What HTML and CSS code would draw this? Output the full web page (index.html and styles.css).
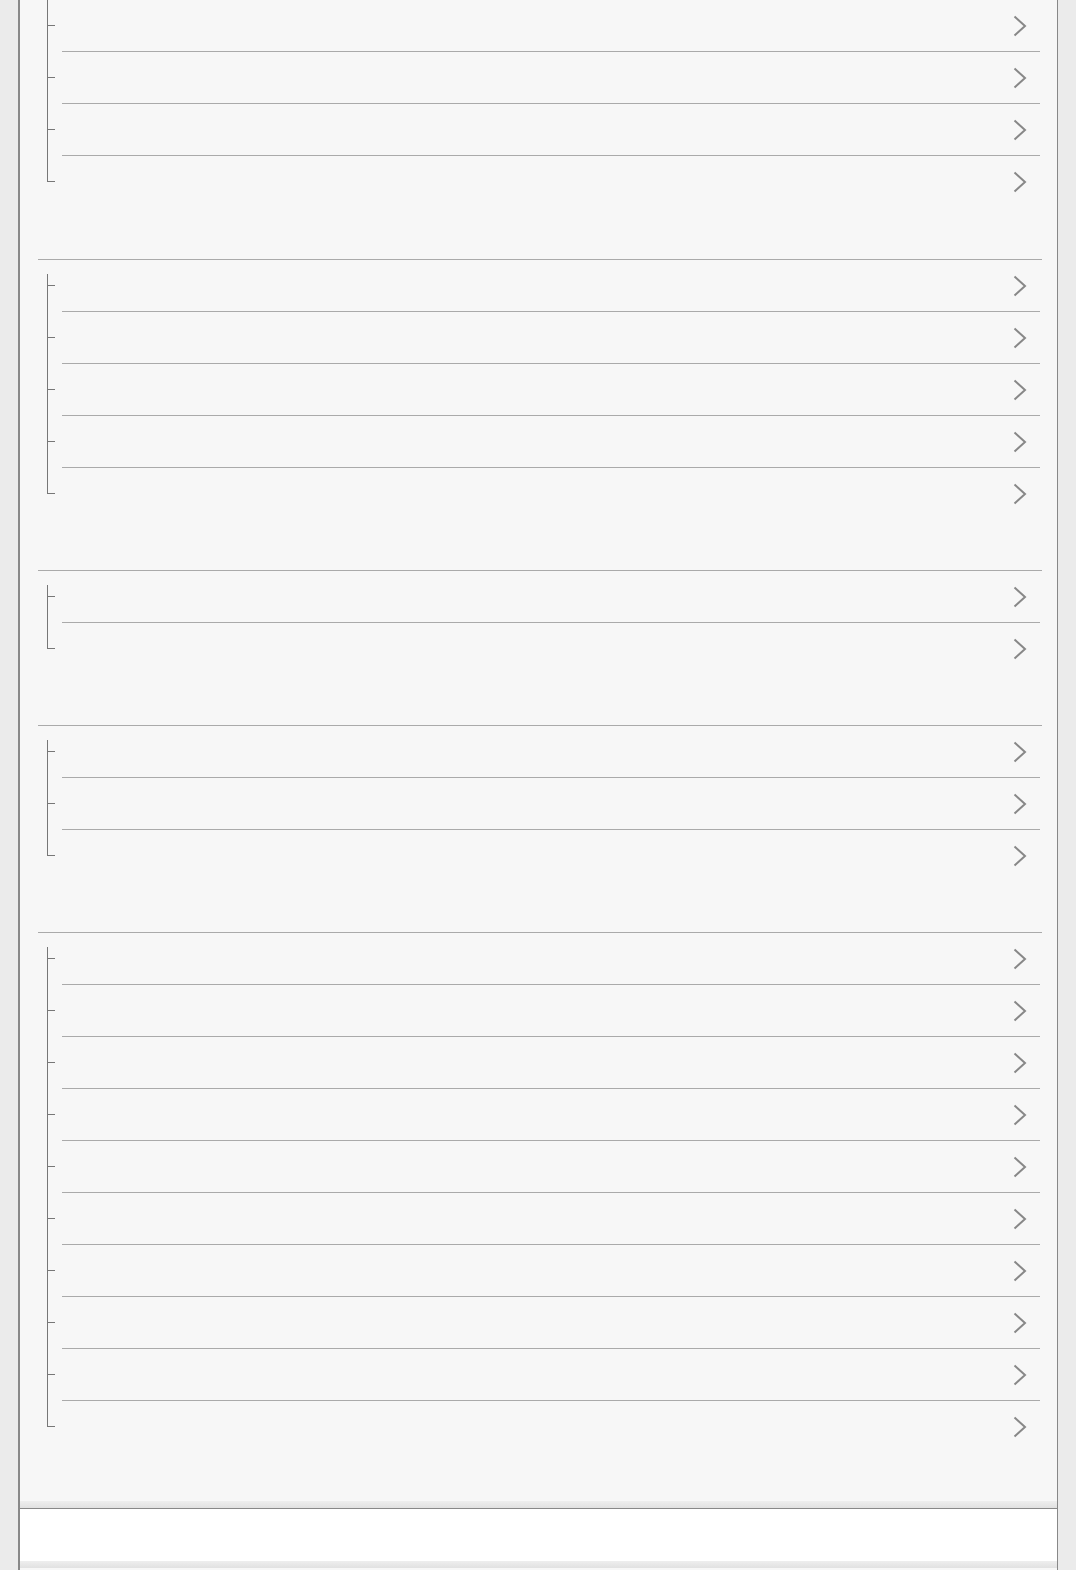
FILE: index.html
```html
<html>
  <head>
    <title>List</title>
    <link rel="stylesheet" href="styles.css">
  </head>
  <body>
  <div id="panel">
    <div class="group cut">
      <div class="row"><svg class="chev" viewBox="0 0 14 22"><polyline points="1.5,1.5 12,11 1.5,20.5"/></svg></div>
      <div class="row"><svg class="chev" viewBox="0 0 14 22"><polyline points="1.5,1.5 12,11 1.5,20.5"/></svg></div>
      <div class="row"><svg class="chev" viewBox="0 0 14 22"><polyline points="1.5,1.5 12,11 1.5,20.5"/></svg></div>
      <div class="row"><svg class="chev" viewBox="0 0 14 22"><polyline points="1.5,1.5 12,11 1.5,20.5"/></svg></div>
    </div>
    <div class="group">
      <div class="row"><svg class="chev" viewBox="0 0 14 22"><polyline points="1.5,1.5 12,11 1.5,20.5"/></svg></div>
      <div class="row"><svg class="chev" viewBox="0 0 14 22"><polyline points="1.5,1.5 12,11 1.5,20.5"/></svg></div>
      <div class="row"><svg class="chev" viewBox="0 0 14 22"><polyline points="1.5,1.5 12,11 1.5,20.5"/></svg></div>
      <div class="row"><svg class="chev" viewBox="0 0 14 22"><polyline points="1.5,1.5 12,11 1.5,20.5"/></svg></div>
      <div class="row"><svg class="chev" viewBox="0 0 14 22"><polyline points="1.5,1.5 12,11 1.5,20.5"/></svg></div>
    </div>
    <div class="group">
      <div class="row"><svg class="chev" viewBox="0 0 14 22"><polyline points="1.5,1.5 12,11 1.5,20.5"/></svg></div>
      <div class="row"><svg class="chev" viewBox="0 0 14 22"><polyline points="1.5,1.5 12,11 1.5,20.5"/></svg></div>
    </div>
    <div class="group">
      <div class="row"><svg class="chev" viewBox="0 0 14 22"><polyline points="1.5,1.5 12,11 1.5,20.5"/></svg></div>
      <div class="row"><svg class="chev" viewBox="0 0 14 22"><polyline points="1.5,1.5 12,11 1.5,20.5"/></svg></div>
      <div class="row"><svg class="chev" viewBox="0 0 14 22"><polyline points="1.5,1.5 12,11 1.5,20.5"/></svg></div>
    </div>
    <div class="group last">
      <div class="row"><svg class="chev" viewBox="0 0 14 22"><polyline points="1.5,1.5 12,11 1.5,20.5"/></svg></div>
      <div class="row"><svg class="chev" viewBox="0 0 14 22"><polyline points="1.5,1.5 12,11 1.5,20.5"/></svg></div>
      <div class="row"><svg class="chev" viewBox="0 0 14 22"><polyline points="1.5,1.5 12,11 1.5,20.5"/></svg></div>
      <div class="row"><svg class="chev" viewBox="0 0 14 22"><polyline points="1.5,1.5 12,11 1.5,20.5"/></svg></div>
      <div class="row"><svg class="chev" viewBox="0 0 14 22"><polyline points="1.5,1.5 12,11 1.5,20.5"/></svg></div>
      <div class="row"><svg class="chev" viewBox="0 0 14 22"><polyline points="1.5,1.5 12,11 1.5,20.5"/></svg></div>
      <div class="row"><svg class="chev" viewBox="0 0 14 22"><polyline points="1.5,1.5 12,11 1.5,20.5"/></svg></div>
      <div class="row"><svg class="chev" viewBox="0 0 14 22"><polyline points="1.5,1.5 12,11 1.5,20.5"/></svg></div>
      <div class="row"><svg class="chev" viewBox="0 0 14 22"><polyline points="1.5,1.5 12,11 1.5,20.5"/></svg></div>
      <div class="row"><svg class="chev" viewBox="0 0 14 22"><polyline points="1.5,1.5 12,11 1.5,20.5"/></svg></div>
    </div>
    <div class="shade"></div>
    <div id="footer"></div>
    <div class="shade"></div>
    <div class="tail"></div>
  </div>
  </body>
</html>
```

FILE: styles.css
```css
body { margin: 0px; background: #ebebeb; font-family: "Liberation Sans", Arial, sans-serif; }

#panel { margin: 0px 18px; border-left: 2px solid #888; border-right: 1px solid #888; background: #f7f7f7; }

.group { margin: 0px 15px 0px 18px; border-top: 1px solid #aaa; padding-bottom: 50px; }
.group.cut { border-top: none; padding-bottom: 51px; }
.group.last { padding-bottom: 48px; }

.row { position: relative; height: 51px; margin-left: 24px; margin-right: 2px; border-bottom: 1px solid #aaa; display: flex; align-items: center; justify-content: flex-end; }
.row:last-child { border-bottom: none; height: 52px; }

/* tree line + tick */
.row::before { content: ""; position: absolute; left: -15px; top: 0px; bottom: -1px; border-left: 1px solid #777; }
.row:first-child::before { top: 14px; }
.cut .row:first-child::before { top: 0px; }
.row:last-child::before { bottom: auto; height: 26px; }
.group .row:only-child::before { top: 14px; height: 12px; }
.row::after { content: ""; position: absolute; left: -14px; top: 25px; width: 7px; border-top: 1px solid #777; }

.chev { width: 14px; height: 22px; margin-right: 13px; }
.chev polyline { fill: none; stroke: #888; stroke-width: 2; }

.shade { height: 7px; background: linear-gradient(#eeeeee, #e1e1e1); }
#footer { height: 52px; background: #fff; border-top: 1px solid #888; }
.tail { height: 10px; }
```
